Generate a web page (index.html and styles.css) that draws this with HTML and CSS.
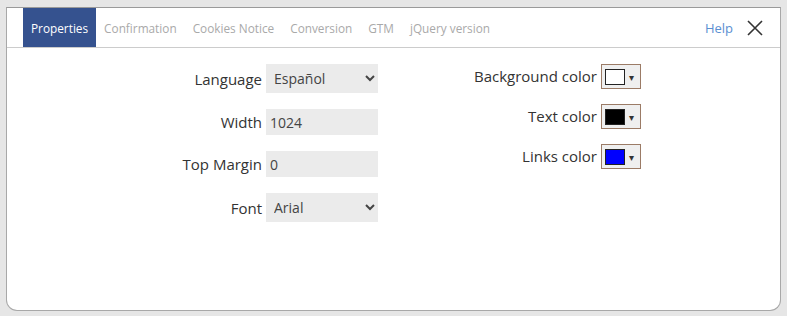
FILE: index.html
```html
<!DOCTYPE html>
<html lang="en">
<head>
    <meta charset="UTF-8">
    <title>Settings</title>
    <link rel="stylesheet" href="styles.css">
</head>
<body>
    <div class="panel">
        <div class="header">
            <div class="tabs">
                <a class="tab active">Properties</a>
                <a class="tab">Confirmation</a>
                <a class="tab">Cookies Notice</a>
                <a class="tab">Conversion</a>
                <a class="tab">GTM</a>
                <a class="tab">jQuery version</a>
            </div>
            <a class="help">Help</a>
            <button class="close" title="Close">
                <svg width="16" height="16" viewBox="0 0 16 16"><path d="M1 1L15 15M15 1L1 15" stroke="#333" stroke-width="1.6" fill="none"/></svg>
            </button>
        </div>

        <div class="content">
            <div class="form left">
                <label>Language</label>
                <select class="field tall">
                    <option>Español</option>
                </select>
                <label>Width</label>
                <input class="field" type="text" value="1024">
                <label>Top Margin</label>
                <input class="field" type="text" value="0">
                <label>Font</label>
                <select class="field tall">
                    <option>Arial</option>
                </select>
            </div>

            <div class="form right">
                <label>Background color</label>
                <div class="picker"><span class="swatch" style="background:#ffffff"></span><span class="arrow">▾</span></div>
                <label>Text color</label>
                <div class="picker"><span class="swatch" style="background:#000000"></span><span class="arrow">▾</span></div>
                <label>Links color</label>
                <div class="picker"><span class="swatch" style="background:#0000ff"></span><span class="arrow">▾</span></div>
            </div>
        </div>
    </div>
</body>
</html>
```

FILE: styles.css
```css
body {
    margin: 0;
    padding: 7px 6px 5px;
    background: #e6e6e6;
    font-family: "Open Sans", "DejaVu Sans", sans-serif;
    color: #333;
}
.panel {
    height: 302px;
    background: white;
    border: 1px solid #a8a8a8;
    border-top-color: #9a9a9a;
    border-radius: 0 0 11px 11px;
}
.header {
    display: flex;
    align-items: stretch;
    height: 39px;
    padding-left: 16px;
    border-bottom: 1px solid #cccccc;
}
.tabs {
    display: flex;
    flex: 1;
}
.tab {
    display: flex;
    align-items: center;
    padding: 1px 8px 0;
    font-size: 11.8px;
    color: #a9a9a9;
    cursor: pointer;
}
.tab.active {
    background: #35528f;
    color: white;
}
.help {
    align-self: center;
    padding-top: 1px;
    font-size: 13px;
    color: #5a8fd2;
    margin-right: 14px;
    cursor: pointer;
}
.close {
    border: none;
    background: none;
    padding: 0;
    margin-right: 17px;
    cursor: pointer;
    display: flex;
    align-items: center;
}
.content {
    display: flex;
    align-items: flex-start;
    padding: 16px 0 0 135px;
}
.form {
    display: grid;
    align-items: center;
    column-gap: 4px;
}
.form label {
    text-align: right;
    font-size: 15px;
    line-height: 20px;
    color: #333;
}
.left {
    grid-template-columns: 120px 112px;
    row-gap: 16px;
}
.right {
    grid-template-columns: 150px 40px;
    row-gap: 15px;
    margin-left: 69px;
}
.right label {
    margin-top: -2px;
}
.field {
    box-sizing: border-box;
    width: 112px;
    height: 26px;
    border: none;
    background: #ebebeb;
    font-family: inherit;
    font-size: 14px;
    color: #444;
    padding: 0 4px;
    outline: none;
}
.field.tall {
    height: 29px;
    padding-left: 4px;
}
.picker {
    box-sizing: border-box;
    display: flex;
    align-items: center;
    width: 40px;
    height: 25px;
    padding-left: 3px;
    border: 1px solid #9b7b66;
    background: #efefef;
}
.swatch {
    box-sizing: border-box;
    width: 20px;
    height: 16px;
    border: 1px solid #222;
}
.arrow {
    font-size: 10px;
    margin-left: 4px;
    color: #333;
}
```
